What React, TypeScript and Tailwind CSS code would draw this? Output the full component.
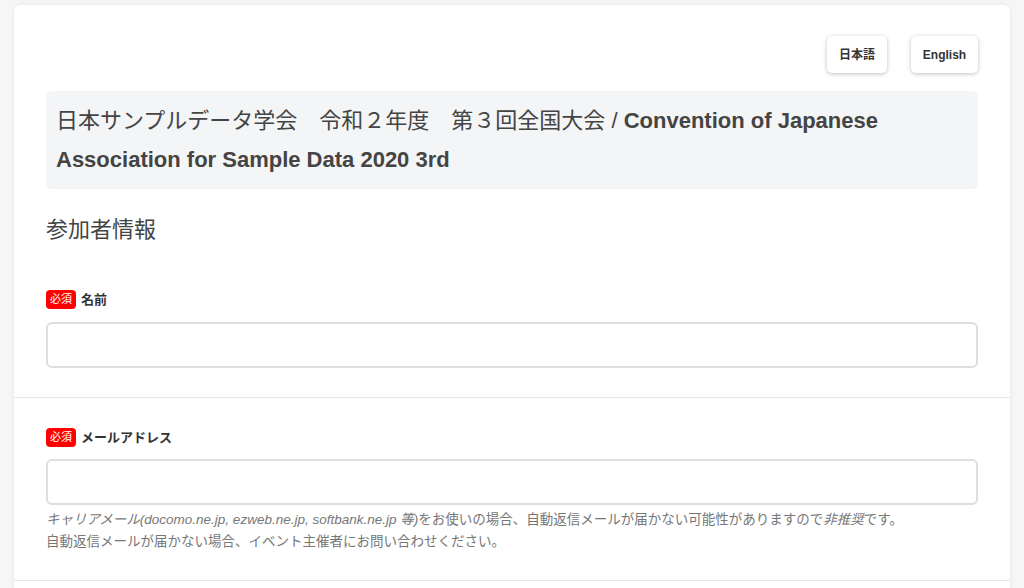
import React from "react";

const font = { fontFamily: '"Liberation Sans", "Noto Sans CJK JP", sans-serif' };

const Required = () => (
  <span className="inline-flex h-[19px] items-center rounded-[4px] bg-[#ff0000] px-[4px] text-[11px] leading-none text-white">
    必須
  </span>
);

const FieldLabel = ({ children }: { children: React.ReactNode }) => (
  <div className="flex items-center gap-[5px]">
    <Required />
    <span className="text-[13px] font-bold text-[#333]">{children}</span>
  </div>
);

const Input = () => (
  <input
    type="text"
    className="mt-[12px] block h-[46px] w-full rounded-[6px] border-2 border-[#dedede] bg-white px-3 text-[15px] outline-none"
  />
);

export default function App() {
  return (
    <div className="min-h-[588px] bg-[#f6f6f6] pt-[5px]" style={font}>
      <div className="mx-[14px] rounded-t-[6px] bg-white shadow-[0_0_4px_rgba(0,0,0,0.08)]">
        {/* Header */}
        <div className="px-[32px] pt-[31px]">
          <div className="flex justify-end gap-[24px]">
            <button className="h-[37px] w-[60px] rounded-[5px] bg-white text-[12px] font-bold text-[#333] shadow-[0_1px_4px_rgba(0,0,0,0.25)]">
              日本語
            </button>
            <button className="h-[37px] w-[67px] rounded-[5px] bg-white text-[12px] font-bold text-[#333] shadow-[0_1px_4px_rgba(0,0,0,0.25)]">
              English
            </button>
          </div>
          <div className="mt-[18px] rounded-[6px] bg-[#f4f5f6] px-[10px] py-[10px] text-[22px] leading-[39px] text-[#444]">
            日本サンプルデータ学会　令和２年度　第３回全国大会 / <b>Convention of Japanese Association for Sample Data 2020 3rd</b>
          </div>
          <h2 className="mt-[28px] text-[22px] leading-[26px] text-[#444]">参加者情報</h2>
        </div>

        {/* Name */}
        <div className="border-b border-[#e8e8e8] px-[32px] pb-[29px] pt-[47px]">
          <FieldLabel>名前</FieldLabel>
          <Input />
        </div>

        {/* Email */}
        <div className="border-b border-[#e8e8e8] px-[32px] pb-[27px] pt-[30px]">
          <FieldLabel>メールアドレス</FieldLabel>
          <Input />
          <p className="mt-[4px] text-[13.5px] leading-[22px] text-[#777]">
            <em>キャリアメール(docomo.ne.jp, ezweb.ne.jp, softbank.ne.jp 等)</em>をお使いの場合、自動返信メールが届かない可能性がありますので<em>非推奨</em>です。
            <br />
            自動返信メールが届かない場合、イベント主催者にお問い合わせください。
          </p>
        </div>
        <div className="h-[40px]" />
      </div>
    </div>
  );
}
